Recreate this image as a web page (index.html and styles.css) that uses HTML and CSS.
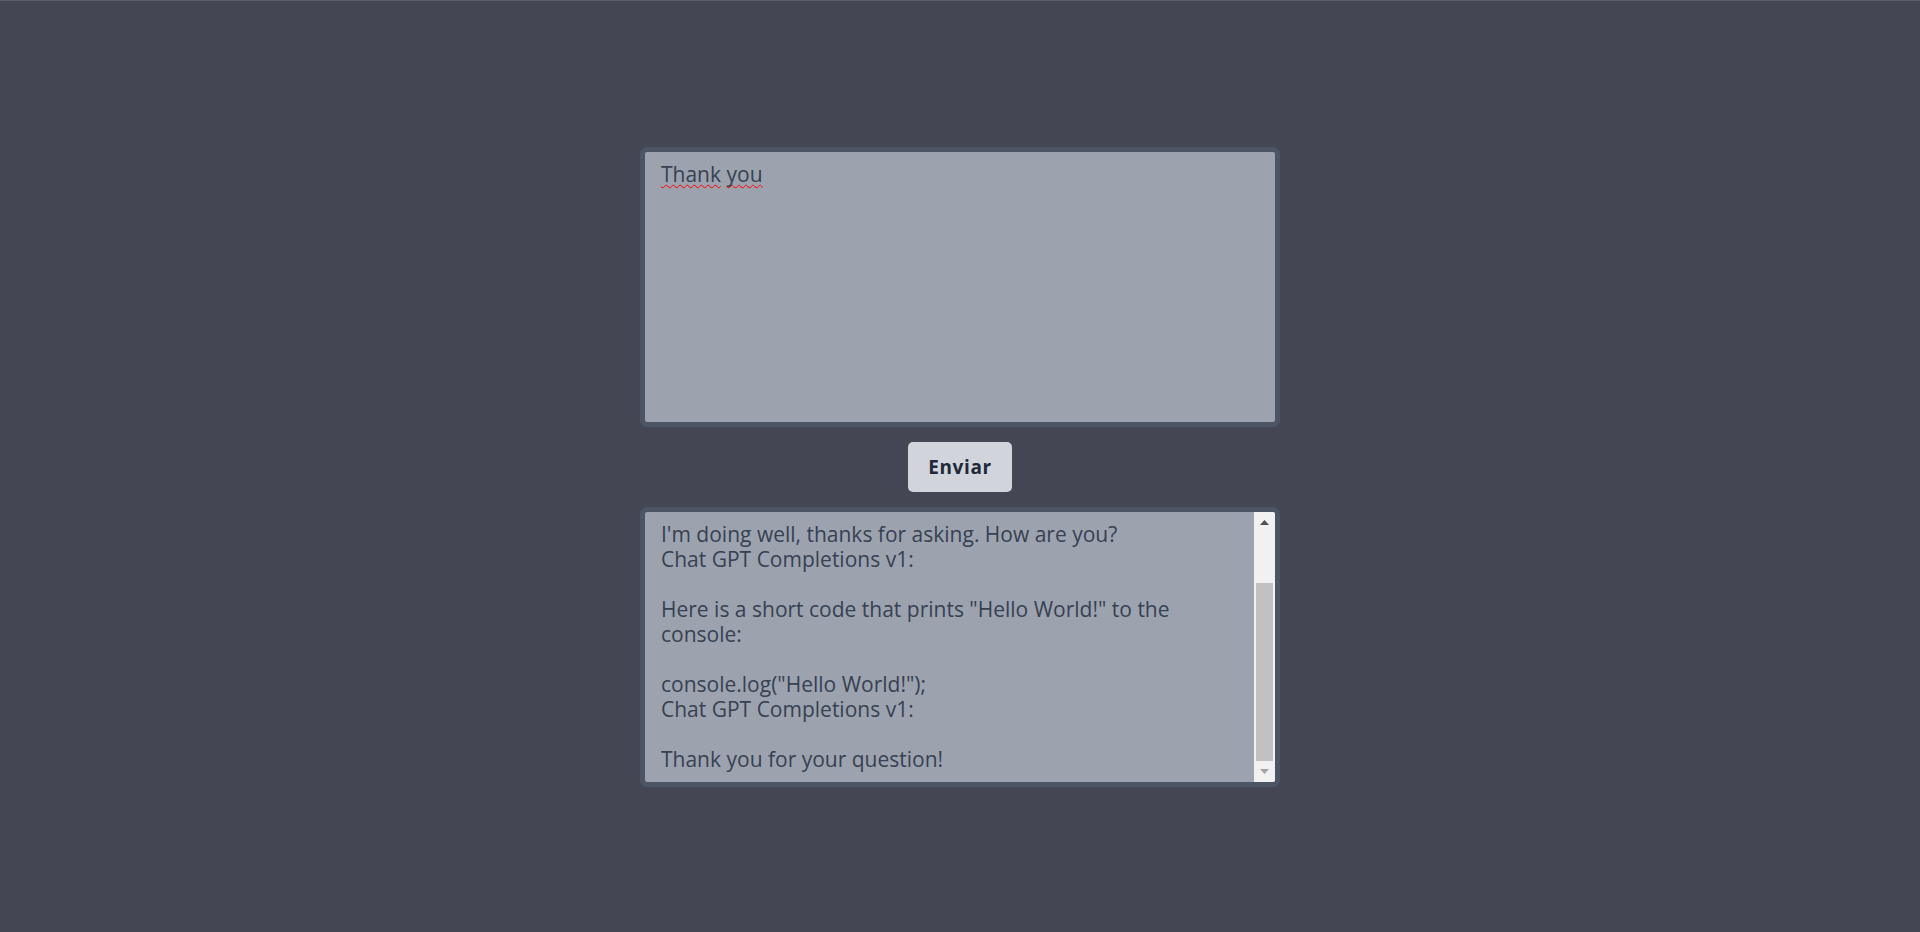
FILE: index.html
```html
<!DOCTYPE html>
<html lang="es">
<head>
<meta charset="utf-8">
<title>Chat GPT Completions</title>
<link rel="stylesheet" href="styles.css">
</head>
<body>
<main class="chat">
  <div class="box prompt" contenteditable="true" role="textbox" spellcheck="false"><span class="misspelled">Thank</span> <span class="misspelled">you</span></div>
  <button class="send" type="button">Enviar</button>
  <div class="output-wrap">
    <textarea class="box output" readonly spellcheck="false">Chat GPT Completions v1:


I'm doing well, thanks for asking. How are you?
Chat GPT Completions v1:

Here is a short code that prints "Hello World!" to the console:

console.log("Hello World!");
Chat GPT Completions v1:

Thank you for your question!</textarea>
    <div class="scrollbar" aria-hidden="true">
      <div class="sb-btn">
        <svg width="9" height="5" viewBox="0 0 9 5"><polygon points="0,5 4.5,0 9,5" fill="#505050"/></svg>
      </div>
      <div class="sb-track"><div class="sb-thumb"></div></div>
      <div class="sb-btn">
        <svg width="9" height="5" viewBox="0 0 9 5"><polygon points="0,0 9,0 4.5,5" fill="#a3a3a3"/></svg>
      </div>
    </div>
  </div>
</main>
<script src="script.js"></script>
</body>
</html>
```

FILE: styles.css
```css
html, body {
  margin: 0;
  padding: 0;
}

body {
  background: #444654;
  border-top: 1px solid #5b5d68;
  min-height: 931px;
  font-family: "Open Sans", "Liberation Sans", sans-serif;
}

.chat {
  display: flex;
  flex-direction: column;
  align-items: center;
  gap: 15px;
  padding-top: 146px;
}

.box {
  box-sizing: border-box;
  width: 640px;
  height: 280px;
  margin: 0;
  border: 5px solid #4b5563;
  border-radius: 7px;
  background: #9ca3af;
  color: #374151;
  font-family: "Open Sans", "Liberation Sans", sans-serif;
  font-size: 21px;
  line-height: 25px;
  padding: 8px 16px 10px 16px;
  outline: none;
  text-align: left;
}

.prompt {
  white-space: pre-wrap;
  overflow: hidden;
  padding-top: 10px;
}

.misspelled {
  text-decoration: underline wavy #ff0000;
  text-decoration-thickness: 1px;
  text-underline-offset: 2px;
  text-decoration-skip-ink: none;
}

.output-wrap {
  position: relative;
  width: 640px;
  height: 280px;
}

.output {
  display: block;
  resize: none;
  overflow-y: scroll;
  scrollbar-width: none;
  padding-right: 37px;
}

.output::-webkit-scrollbar {
  display: none;
}

.scrollbar {
  position: absolute;
  top: 5px;
  right: 5px;
  bottom: 5px;
  width: 21px;
  display: flex;
  flex-direction: column;
  background: #f1f1f1;
  border-top-right-radius: 2px;
  border-bottom-right-radius: 2px;
}

.sb-btn {
  height: 21px;
  flex: none;
  display: flex;
  align-items: center;
  justify-content: center;
}

.sb-btn svg {
  display: block;
}

.sb-track {
  flex: 1;
  display: flex;
  flex-direction: column;
  justify-content: flex-end;
  padding: 0 2px;
}

.sb-thumb {
  height: 178px;
  background: #c1c1c1;
}

.send {
  box-sizing: border-box;
  height: 50px;
  width: 104px;
  padding: 0;
  border: none;
  border-radius: 5px;
  background: #d1d5db;
  color: #1f2937;
  font-family: "Open Sans", "Liberation Sans", sans-serif;
  font-size: 19px;
  font-weight: 700;
  letter-spacing: 0.6px;
  cursor: pointer;
}
```

FILE: script.js
```js
var out = document.querySelector('.output');
out.scrollTop = out.scrollHeight;
```
